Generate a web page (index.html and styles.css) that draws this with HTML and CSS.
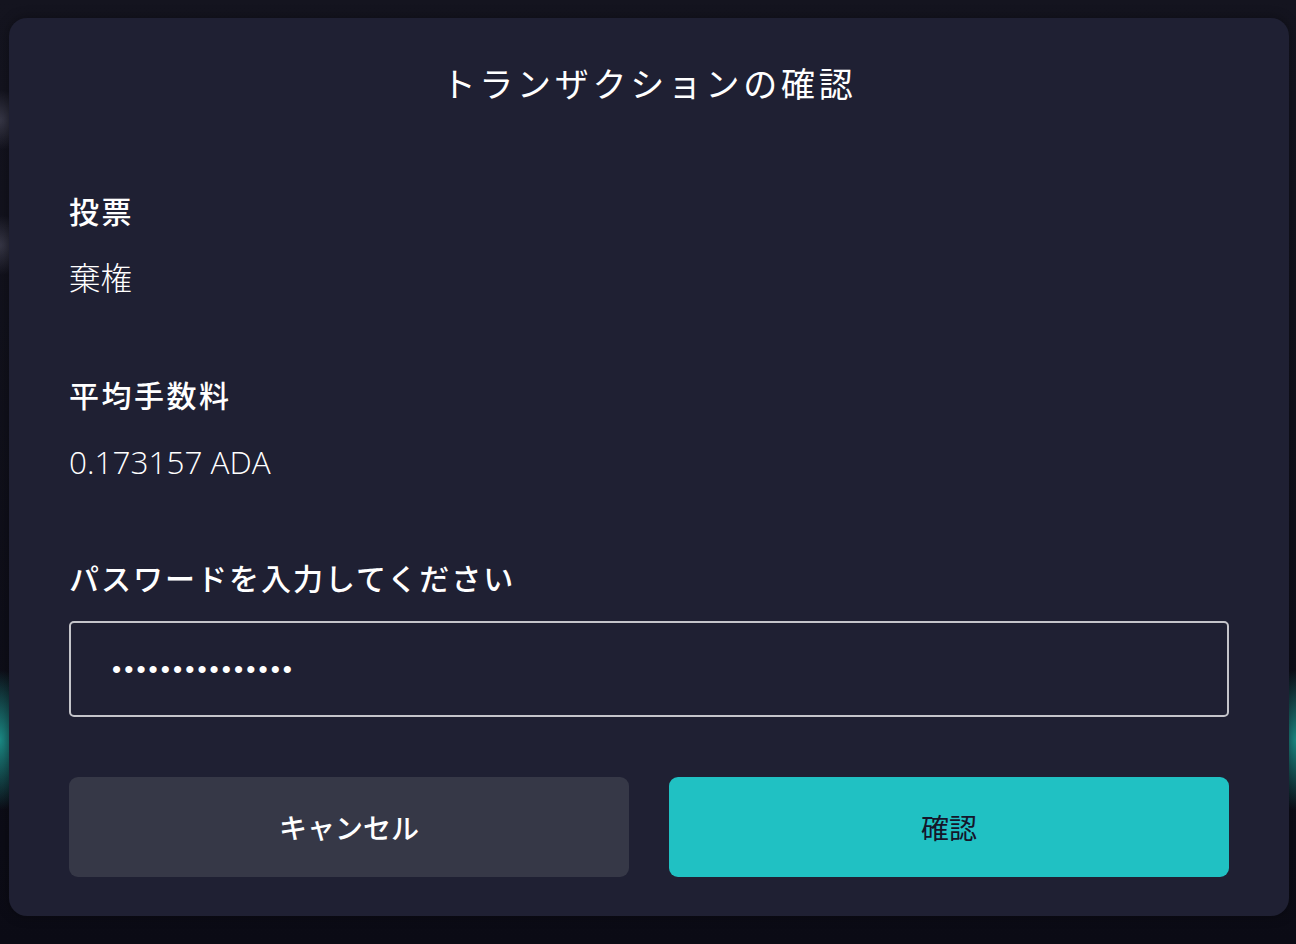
FILE: index.html
```html
<!DOCTYPE html>
<html lang="ja">
<head>
<meta charset="utf-8">
<title>トランザクションの確認</title>
<link rel="stylesheet" href="styles.css">
</head>
<body>
<div class="modal">
  <div class="modal-header">
    <h1 class="modal-title">トランザクションの確認</h1>
  </div>
  <div class="field field-vote">
    <div class="field-label">投票</div>
    <div class="field-value">棄権</div>
  </div>
  <div class="field field-fee">
    <div class="field-label">平均手数料</div>
    <div class="field-value">0.173157 ADA</div>
  </div>
  <div class="field field-password">
    <label class="field-label field-label-password" for="pw">パスワードを入力してください</label>
    <input id="pw" class="password-input" type="password" value="abcdefghijklmno">
  </div>
  <div class="actions">
    <button class="btn btn-cancel" type="button">キャンセル</button>
    <button class="btn btn-confirm" type="button">確認</button>
  </div>
</div>
</body>
</html>
```

FILE: styles.css
```css
html, body {
  margin: 0;
  padding: 0;
}

body {
  width: 1296px;
  height: 944px;
  overflow: hidden;
  background:
    radial-gradient(ellipse 40px 70px at 0px 740px, rgba(32, 180, 170, 0.75), rgba(32, 180, 170, 0) 100%),
    radial-gradient(ellipse 40px 70px at 1296px 740px, rgba(32, 180, 170, 0.75), rgba(32, 180, 170, 0) 100%),
    radial-gradient(ellipse 30px 30px at 0px 120px, rgba(90, 90, 110, 0.5), rgba(90, 90, 110, 0) 100%),
    radial-gradient(ellipse 30px 30px at 0px 245px, rgba(90, 90, 110, 0.5), rgba(90, 90, 110, 0) 100%),
    linear-gradient(#14141f, #0b0b15);
  font-family: "Open Sans", "Noto Sans CJK JP", sans-serif;
  color: #ffffff;
  padding-top: 18px;
  padding-left: 9px;
  box-sizing: border-box;
}

.modal {
  width: 1280px;
  height: 898px;
  box-sizing: border-box;
  background: #1f2033;
  border-radius: 18px;
  padding: 0 60px 39px;
  display: flex;
  flex-direction: column;
  box-shadow: 0 0 12px rgba(0, 0, 0, 0.35);
}

.modal-header {
  height: 129px;
  display: flex;
  align-items: center;
  justify-content: center;
}

.modal-title {
  margin: 0;
  font-family: "Noto Sans CJK JP", sans-serif;
  font-size: 34px;
  font-weight: 400;
  letter-spacing: 3.7px;
  line-height: 40px;
}

.field {
  display: flex;
  flex-direction: column;
}

.field-vote {
  margin-top: 43px;
}

.field-fee {
  margin-top: 76px;
}

.field-password {
  margin-top: 75px;
}

.field-label {
  font-family: "Noto Sans CJK JP", sans-serif;
  font-size: 30px;
  font-weight: 500;
  line-height: 40px;
  letter-spacing: 2.5px;
}

.field-label-password {
  letter-spacing: 2px;
}

.field-value {
  margin-top: 28px;
  font-size: 31.5px;
  font-weight: 300;
  line-height: 40px;
}

.password-input {
  margin-top: 24px;
  height: 96px;
  box-sizing: border-box;
  border: 2px solid #c4c4ca;
  border-radius: 5px;
  background: transparent;
  color: #ffffff;
  padding: 0 41px;
  font-family: "Liberation Sans", sans-serif;
  font-size: 26px;
  letter-spacing: 3.1px;
  outline: none;
}

.actions {
  margin-top: 60px;
  display: flex;
  gap: 40px;
}

.btn {
  flex: 1;
  height: 100px;
  border: none;
  border-radius: 9px;
  font-family: "Noto Sans CJK JP", sans-serif;
  font-size: 28px;
  letter-spacing: 0;
  cursor: pointer;
}

.btn-cancel {
  background: #363847;
  color: #ffffff;
  font-weight: 500;
}

.btn-confirm {
  background: #20c1c3;
  color: #15162a;
  font-weight: 400;
}
```
